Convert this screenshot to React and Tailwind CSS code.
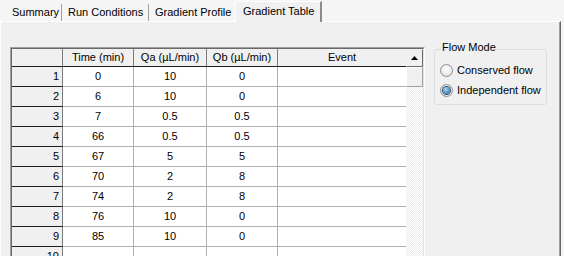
const rows = [
  { n: 1, time: "0", qa: "10", qb: "0" },
  { n: 2, time: "6", qa: "10", qb: "0" },
  { n: 3, time: "7", qa: "0.5", qb: "0.5" },
  { n: 4, time: "66", qa: "0.5", qb: "0.5" },
  { n: 5, time: "67", qa: "5", qb: "5" },
  { n: 6, time: "70", qa: "2", qb: "8" },
  { n: 7, time: "74", qa: "2", qb: "8" },
  { n: 8, time: "76", qa: "10", qb: "0" },
  { n: 9, time: "85", qa: "10", qb: "0" },
  { n: 10, time: "", qa: "", qb: "" },
  { n: 11, time: "", qa: "", qb: "" },
];

function Tabs() {
  return (
    <div className="flex h-[21px] items-end">
      <div className="ml-[2px] flex h-[17px] w-[60px] items-center border-r border-[#a0a0a0] pl-[10px]">Summary</div>
      <div className="flex h-[17px] w-[87px] items-center border-r border-[#a0a0a0] pl-[6px]">Run Conditions</div>
      <div className="flex h-[17px] w-[86px] items-center pl-[6px]">Gradient Profile</div>
      <div className="relative z-10 -mb-px flex h-[21px] w-[87px] items-center border-l border-t border-r-2 border-white border-r-[#8a8a8a] bg-[#f0f0f0] pl-[7px] pb-[1px]">
        Gradient Table
      </div>
    </div>
  );
}

function ScrollBar() {
  return (
    <div className="flex w-[17px] flex-col bg-[repeating-conic-gradient(#ffffff_0%_25%,#ececec_0%_50%)] bg-size-[2px_2px]">
      <div className="flex h-[18px] items-center justify-center border border-[#f0f0f0] border-r-[#696969] border-b-[#696969] bg-[#f0f0f0]">
        <svg width="7" height="4" viewBox="0 0 7 4">
          <polygon points="3.5,0 7,4 0,4" fill="#000" />
        </svg>
      </div>
      <div className="h-[20px] border border-white border-r-[#a0a0a0] border-b-[#a0a0a0] bg-[#f0f0f0]" />
    </div>
  );
}

function Grid() {
  return (
    <div className="flex">
      <div className="flex w-[394px] flex-col">
        <div className="flex h-[18px] border-b border-[#1e1e1e] bg-[#f0f0f0]">
          <div className="w-[51px] border-r border-[#7a7a7a]" />
          <div className="flex w-[71px] items-center justify-center border-r border-[#7a7a7a]">Time (min)</div>
          <div className="flex w-[73px] items-center justify-center border-r border-[#7a7a7a]">Qa (µL/min)</div>
          <div className="flex w-[71px] items-center justify-center border-r border-[#7a7a7a]">Qb (µL/min)</div>
          <div className="flex w-[128px] items-center justify-center">Event</div>
        </div>
        {rows.map((r) => (
          <div key={r.n} className="flex h-[20px]">
            <div className="flex w-[51px] items-center justify-end border-r border-b border-r-[#7a7a7a] border-b-[#1e1e1e] bg-[#f0f0f0] pr-[3px]">
              {r.n}
            </div>
            <div className="flex w-[71px] items-center justify-center border-r border-b border-[#b0b0b0] bg-white">{r.time}</div>
            <div className="flex w-[73px] items-center justify-center border-r border-b border-[#b0b0b0] bg-white">{r.qa}</div>
            <div className="flex w-[71px] items-center justify-center border-r border-b border-[#b0b0b0] bg-white">{r.qb}</div>
            <div className="w-[128px] border-b border-[#b0b0b0] bg-white" />
          </div>
        ))}
      </div>
      <ScrollBar />
    </div>
  );
}

function Radio({ checked, label }) {
  return (
    <div className="flex h-[20px] items-center gap-[4px]">
      <div className="flex h-[13px] w-[13px] items-center justify-center rounded-full border border-[#8e8f8f] bg-[radial-gradient(circle_at_50%_40%,#ffffff,#dcdcdc)]">
        {checked && (
          <div className="h-[7px] w-[7px] rounded-full bg-[radial-gradient(circle_at_40%_35%,#a6d8f8,#1c5b8f)] ring-1 ring-[#2b4f72]" />
        )}
      </div>
      <span>{label}</span>
    </div>
  );
}

export default function App() {
  return (
    <div className="h-[256px] w-[564px] overflow-hidden bg-[#f5f5f5] text-[11px] leading-[13px] text-black font-['Liberation_Sans',Arial,sans-serif]">
      <Tabs />
      <div className="h-[300px] w-[561px] border-l border-t border-r border-white border-r-[#696969] bg-[#f0f0f0]">
        <div className="flex h-full items-start border-r border-[#a0a0a0]">
          <div className="ml-[9px] mt-[25px] border border-[#a0a0a0] border-r-white border-b-white">
            <div className="border border-[#696969] border-r-[#e3e3e3] border-b-[#e3e3e3]">
              <Grid />
            </div>
          </div>
          <fieldset className="ml-[9px] mt-[19px] w-[113px] rounded-[3px] border border-[#d5dfe5] pb-[4px] pl-[5px]">
            <legend className="ml-[1px] px-[1px] pb-[4px]">Flow Mode</legend>
            <div className="mt-[2px]">
              <Radio label="Conserved flow" />
              <Radio checked label="Independent flow" />
            </div>
          </fieldset>
        </div>
      </div>
    </div>
  );
}
